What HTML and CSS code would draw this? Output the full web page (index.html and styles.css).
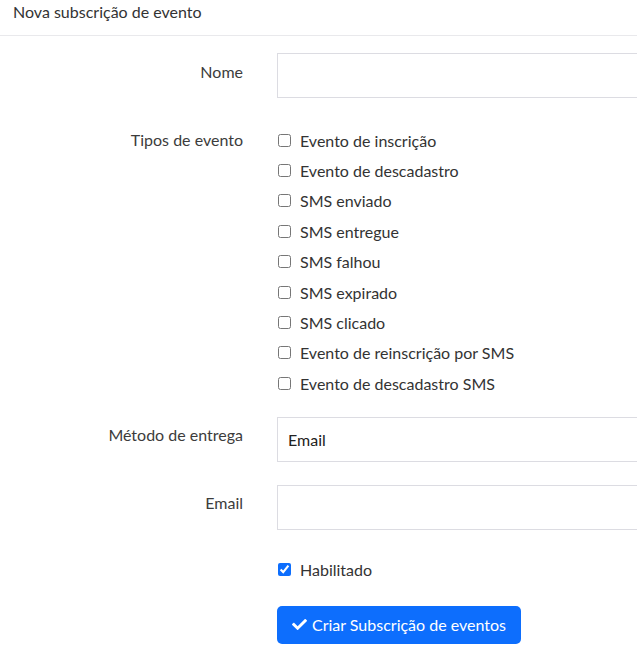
FILE: index.html
```html
<!DOCTYPE html>
<html lang="pt">
<head>
<meta charset="utf-8">
<title>Nova subscrição de evento</title>
<link rel="stylesheet" href="styles.css">
</head>
<body>
<div class="card">
  <div class="card-header">Nova subscrição de evento</div>
  <form class="card-body">
    <div class="row row-name">
      <label class="lbl" for="nome">Nome</label>
      <div class="field"><input class="input" id="nome" type="text"></div>
    </div>
    <div class="row row-types">
      <div class="lbl">Tipos de evento</div>
      <div class="field checks">
        <label class="check"><input type="checkbox"><span>Evento de inscrição</span></label>
        <label class="check"><input type="checkbox"><span>Evento de descadastro</span></label>
        <label class="check"><input type="checkbox"><span>SMS enviado</span></label>
        <label class="check"><input type="checkbox"><span>SMS entregue</span></label>
        <label class="check"><input type="checkbox"><span>SMS falhou</span></label>
        <label class="check"><input type="checkbox"><span>SMS expirado</span></label>
        <label class="check"><input type="checkbox"><span>SMS clicado</span></label>
        <label class="check"><input type="checkbox"><span>Evento de reinscrição por SMS</span></label>
        <label class="check"><input type="checkbox"><span>Evento de descadastro SMS</span></label>
      </div>
    </div>
    <div class="row row-method">
      <label class="lbl" for="metodo">Método de entrega</label>
      <div class="field"><div class="input select" id="metodo">Email</div></div>
    </div>
    <div class="row row-email">
      <label class="lbl" for="email">Email</label>
      <div class="field"><input class="input" id="email" type="text"></div>
    </div>
    <div class="row row-enabled">
      <div class="lbl"></div>
      <div class="field">
        <label class="check"><input type="checkbox" checked><span>Habilitado</span></label>
      </div>
    </div>
    <div class="row row-submit">
      <div class="lbl"></div>
      <div class="field">
        <button class="btn" type="button"><svg class="btn-icon" viewBox="0 0 512 512" width="15" height="15" aria-hidden="true"><path fill="currentColor" d="M173.9 439.4 7.5 273c-10-10-10-26.2 0-36.2l36.2-36.2c10-10 26.2-10 36.2 0L192 312.7 432.1 72.6c10-10 26.2-10 36.2 0l36.2 36.2c10 10 10 26.2 0 36.2L210.1 439.4c-10 10-26.2 10-36.2 0z"/></svg>Criar Subscrição de eventos</button>
      </div>
    </div>
  </form>
</div>
</body>
</html>
```
FILE: styles.css
```css
html, body {
  margin: 0;
  padding: 0;
  background: #fff;
  overflow: hidden;
}
body {
  font-family: "Lato", "Noto Sans", sans-serif;
  font-size: 16px;
  color: #333;
}
.card-header {
  height: 36px;
  box-sizing: border-box;
  padding: 2px 13px 0;
  line-height: 20px;
  border-bottom: 1px solid #e9e9ec;
}
.card-body {
  display: flex;
  flex-direction: column;
  padding-top: 17px;
}
.row {
  display: flex;
  gap: 34px;
}
.lbl {
  width: 243px;
  flex: none;
  text-align: right;
  color: #3c3c3c;
  line-height: 20px;
}
.field {
  flex: 1;
  min-width: 0;
}
.input {
  display: block;
  box-sizing: border-box;
  width: 100%;
  height: 45px;
  margin: 0;
  border: 1px solid #dcdce2;
  border-right: 0;
  border-radius: 0;
  background: #fff;
  font: inherit;
  color: #222;
  padding: 0 10px;
}
.select {
  line-height: 43px;
}
.row-name .lbl { padding-top: 9px; }
.row-types { margin-top: 24px; }
.row-types .lbl { padding-top: 8px; }
.checks {
  display: flex;
  flex-direction: column;
  padding-top: 3px;
}
.check {
  display: flex;
  align-items: center;
  height: 30.4px;
  gap: 9px;
}
.check input {
  width: 13px;
  height: 13px;
  margin: 0 0 0 1px;
  accent-color: #0d6efd;
}
.row-method { margin-top: 18px; }
.row-method .lbl { padding-top: 8px; }
.row-email { margin-top: 23px; }
.row-email .lbl { padding-top: 8px; }
.row-enabled { margin-top: 24px; }
.row-enabled .field { padding-top: 1px; }
.row-submit { margin-top: 21px; }
.btn {
  display: inline-flex;
  align-items: center;
  gap: 5px;
  height: 38px;
  padding: 0 15px;
  border: none;
  border-radius: 5px;
  background: #0d6efd;
  color: #fff;
  font: inherit;
  cursor: pointer;
}
.btn-icon {
  width: 15px;
  height: 15px;
}
```
